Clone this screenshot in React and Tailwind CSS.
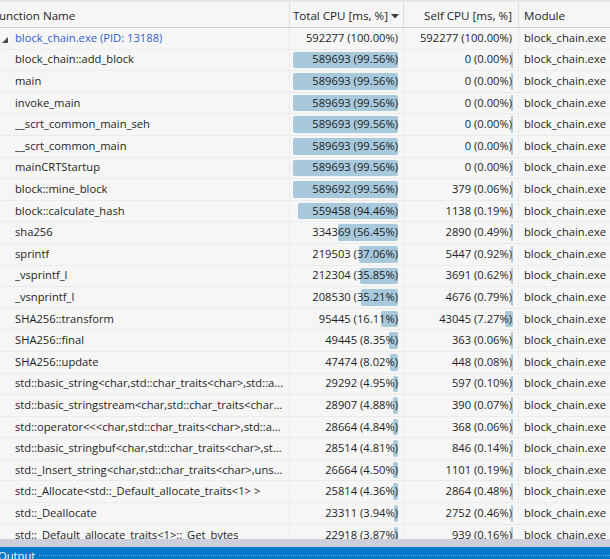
import React from 'react';

const rows = [
  { name: 'block_chain.exe (PID: 13188)', total: '592277 (100.00%)', tp: null, self: '592277 (100.00%)', sp: null, root: true },
  { name: 'block_chain::add_block', total: '589693 (99.56%)', tp: 99.56, self: '0 (0.00%)', sp: 0 },
  { name: 'main', total: '589693 (99.56%)', tp: 99.56, self: '0 (0.00%)', sp: 0 },
  { name: 'invoke_main', total: '589693 (99.56%)', tp: 99.56, self: '0 (0.00%)', sp: 0 },
  { name: '__scrt_common_main_seh', total: '589693 (99.56%)', tp: 99.56, self: '0 (0.00%)', sp: 0 },
  { name: '__scrt_common_main', total: '589693 (99.56%)', tp: 99.56, self: '0 (0.00%)', sp: 0 },
  { name: 'mainCRTStartup', total: '589693 (99.56%)', tp: 99.56, self: '0 (0.00%)', sp: 0 },
  { name: 'block::mine_block', total: '589692 (99.56%)', tp: 99.56, self: '379 (0.06%)', sp: 0.06 },
  { name: 'block::calculate_hash', total: '559458 (94.46%)', tp: 94.46, self: '1138 (0.19%)', sp: 0.19 },
  { name: 'sha256', total: '334369 (56.45%)', tp: 56.45, self: '2890 (0.49%)', sp: 0.49 },
  { name: 'sprintf', total: '219503 (37.06%)', tp: 37.06, self: '5447 (0.92%)', sp: 0.92 },
  { name: '_vsprintf_l', total: '212304 (35.85%)', tp: 35.85, self: '3691 (0.62%)', sp: 0.62 },
  { name: '_vsnprintf_l', total: '208530 (35.21%)', tp: 35.21, self: '4676 (0.79%)', sp: 0.79 },
  { name: 'SHA256::transform', total: '95445 (16.11%)', tp: 16.11, self: '43045 (7.27%)', sp: 7.27 },
  { name: 'SHA256::final', total: '49445 (8.35%)', tp: 8.35, self: '363 (0.06%)', sp: 0.06 },
  { name: 'SHA256::update', total: '47474 (8.02%)', tp: 8.02, self: '448 (0.08%)', sp: 0.08 },
  { name: 'std::basic_string<char,std::char_traits<char>,std::a...', total: '29292 (4.95%)', tp: 4.95, self: '597 (0.10%)', sp: 0.1 },
  { name: 'std::basic_stringstream<char,std::char_traits<char...', total: '28907 (4.88%)', tp: 4.88, self: '390 (0.07%)', sp: 0.07 },
  { name: 'std::operator<<<char,std::char_traits<char>,std::a...', total: '28664 (4.84%)', tp: 4.84, self: '368 (0.06%)', sp: 0.06 },
  { name: 'std::basic_stringbuf<char,std::char_traits<char>,st...', total: '28514 (4.81%)', tp: 4.81, self: '846 (0.14%)', sp: 0.14 },
  { name: 'std::_Insert_string<char,std::char_traits<char>,uns...', total: '26664 (4.50%)', tp: 4.5, self: '1101 (0.19%)', sp: 0.19 },
  { name: 'std::_Allocate<std::_Default_allocate_traits<1> >', total: '25814 (4.36%)', tp: 4.36, self: '2864 (0.48%)', sp: 0.48 },
  { name: 'std::_Deallocate', total: '23311 (3.94%)', tp: 3.94, self: '2752 (0.46%)', sp: 0.46 },
  { name: 'std::_Default_allocate_traits<1>::_Get_bytes', total: '22918 (3.87%)', tp: 3.87, self: '939 (0.16%)', sp: 0.16 },
];

const Bar = ({ pct, max }) => {
  if (pct === null) return null;
  const w = Math.max(2, (pct / 100) * max);
  return (
    <div
      className="absolute right-[5px] top-[2px] bottom-[2px] rounded-[2px] bg-[#a8c9dc]"
      style={{ width: `${w}px` }}
    />
  );
};

const App = () => {
  return (
    <div className="w-[610px] h-[559px] overflow-hidden flex flex-col bg-[#f6f6f6] text-[11.2px] text-[#1e1e1e] font-['Segoe_UI','Open_Sans',sans-serif]">
      <div className="h-[2px] shrink-0 bg-[#e6e7ed]" />

      {/* header */}
      <div className="h-[26px] shrink-0 grid grid-cols-[290px_114px_115px_1fr] border-b border-[#cccedb] bg-[#f6f6f6] text-[11.6px]">
        <div className="flex items-center pt-[2px] border-r border-[#dcdce2] overflow-hidden">
          <span className="ml-[-7px] whitespace-nowrap">Function Name</span>
        </div>
        <div className="flex items-center justify-end pt-[2px] pr-[4px] border-r border-[#dcdce2] whitespace-nowrap">
          <span>Total CPU [ms, %]</span>
          <svg width="8" height="5" viewBox="0 0 8 5" className="ml-[3px] mt-[1px]">
            <path d="M0 0 L8 0 L4 4.5 Z" fill="#3c3c3c" />
          </svg>
        </div>
        <div className="flex items-center justify-end pt-[2px] pr-[6px] border-r border-[#dcdce2] whitespace-nowrap">
          Self CPU [ms, %]
        </div>
        <div className="flex items-center pt-[2px] pl-[5px] whitespace-nowrap">Module</div>
      </div>

      {/* rows */}
      <div className="flex-1 overflow-hidden">
        {rows.map((r, i) => (
          <div
            key={i}
            className="h-[21.6px] grid grid-cols-[290px_114px_115px_1fr] border-b border-[#ebebeb]"
          >
            <div className="relative flex items-center pl-[15px] pr-[5px] border-r border-[#ebebeb] overflow-hidden">
              {r.root && (
                <svg width="6" height="6" viewBox="0 0 6 6" className="absolute left-[2px] top-[9px]">
                  <path d="M6 0 L6 6 L0 6 Z" fill="#4a4a4a" />
                </svg>
              )}
              <span className={`truncate whitespace-nowrap ${r.root ? 'text-[#2f5ed8]' : ''}`}>{r.name}</span>
            </div>
            <div className="relative flex items-center justify-end pr-[5px] border-r border-[#ebebeb] whitespace-nowrap">
              <Bar pct={r.tp} max={105.5} />
              <span className="relative">{r.total}</span>
            </div>
            <div className="relative flex items-center justify-end pr-[6px] border-r border-[#ebebeb] whitespace-nowrap">
              <Bar pct={r.sp} max={106} />
              <span className="relative">{r.self}</span>
            </div>
            <div className="flex items-center pl-[5px] whitespace-nowrap overflow-hidden">block_chain.exe</div>
          </div>
        ))}
      </div>

      {/* output panel title */}
      <div className="h-[8px] shrink-0 bg-[#cccedb]" />
      <div className="h-[12px] shrink-0 bg-[#007acc] flex items-start overflow-hidden">
        <span className="ml-[-2px] mt-[2px] text-white leading-[14px] whitespace-nowrap">Output</span>
        <div className="flex-1 ml-[4px] mt-[8px] mr-0 border-t border-dotted border-[#6fb0e0]" />
      </div>
    </div>
  );
};

export default App;
